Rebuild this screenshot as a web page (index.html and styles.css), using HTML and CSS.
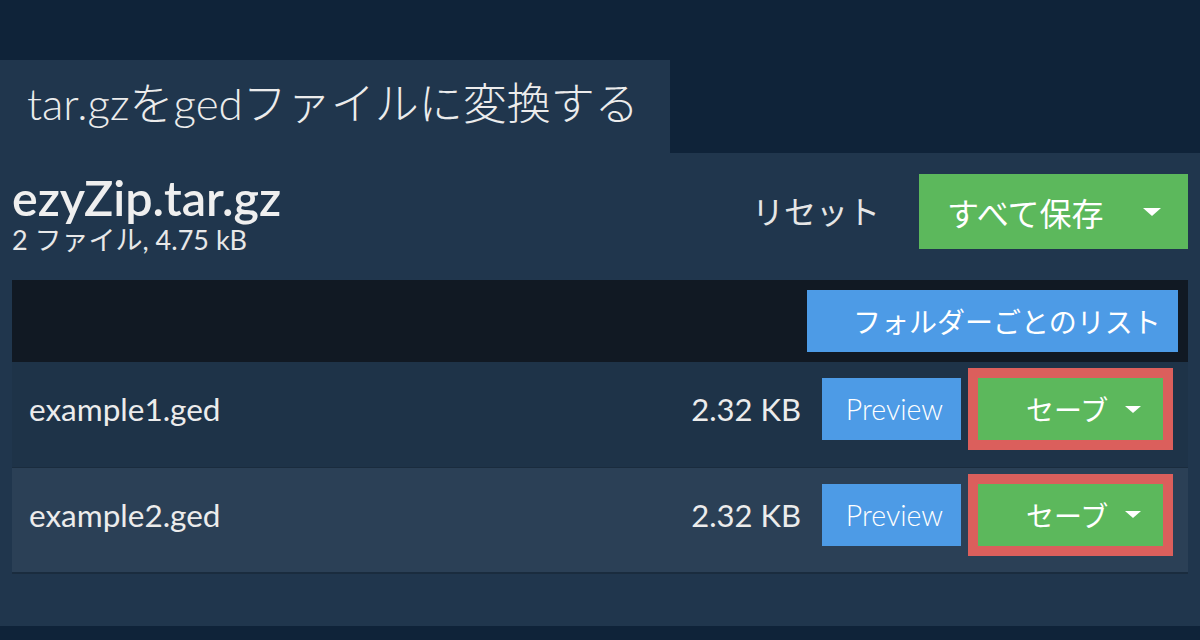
FILE: index.html
```html
<!DOCTYPE html>
<html lang="ja">
<head>
<meta charset="utf-8">
<title>tar.gzをgedファイルに変換する</title>
<link rel="stylesheet" href="styles.css">
</head>
<body>
<div class="page">
  <div class="tab"><h1 class="tab-title">tar.gzをgedファイルに変換する</h1></div>
  <div class="panel">
    <div class="head">
      <div class="info">
        <div class="archive-name">ezyZip.tar.gz</div>
        <div class="archive-meta">2 ファイル, 4.75 kB</div>
      </div>
      <div class="actions">
        <button class="btn-reset">リセット</button>
        <button class="btn-save-all">すべて保存<span class="caret caret-lg"></span></button>
      </div>
    </div>
    <div class="toolbar">
      <button class="btn-folder">フォルダーごとのリスト</button>
    </div>
    <div class="rows">
      <div class="row row-odd">
        <div class="file-name">example1.ged</div>
        <div class="file-size">2.32 KB</div>
        <button class="btn-preview">Preview</button>
        <button class="btn-save">セーブ<span class="caret caret-sm"></span></button>
      </div>
      <div class="row row-even">
        <div class="file-name">example2.ged</div>
        <div class="file-size">2.32 KB</div>
        <button class="btn-preview">Preview</button>
        <button class="btn-save">セーブ<span class="caret caret-sm"></span></button>
      </div>
    </div>
  </div>
</div>
</body>
</html>
```
FILE: styles.css
```css
* { box-sizing: border-box; }
html, body { margin: 0; padding: 0; }
body {
  background: #0f2339;
  font-family: Lato, "Noto Sans CJK JP", sans-serif;
  color: #eeeeee;
  width: 1200px;
  height: 640px;
  overflow: hidden;
}
button {
  font-family: Lato, "Noto Sans CJK JP", sans-serif;
  border: none;
  margin: 0;
  cursor: pointer;
}
.page { padding-top: 60px; }
.tab {
  display: inline-block;
  width: 670px;
  height: 93px;
  background: #20364d;
  padding: 0 0 0 27px;
}
.tab-title {
  margin: 0;
  font-size: 44px;
  font-weight: 300;
  line-height: 86px;
  color: #ececec;
  white-space: nowrap;
}
.panel {
  background: #20364d;
  padding: 21px 12px 54px 12px;
}
.head {
  display: flex;
  align-items: flex-start;
  justify-content: space-between;
}
.archive-name {
  font-size: 48.5px;
  font-weight: 600;
  line-height: 46px;
  color: #efefef;
}
.archive-meta {
  margin-top: 5px;
  font-size: 27px;
  line-height: 29px;
  color: #e8e8e8;
}
.actions {
  display: flex;
  align-items: center;
}
.btn-reset {
  background: transparent;
  color: #e6e6e6;
  font-size: 32px;
  font-weight: 400;
  padding: 0;
  margin-right: 39px;
  height: 75px;
  line-height: 75px;
}
.btn-save-all {
  display: flex;
  align-items: center;
  width: 269px;
  height: 75px;
  background: #5cb85c;
  color: #ffffff;
  font-size: 32px;
  padding: 0 0 0 28px;
}
.caret {
  display: inline-block;
  width: 0;
  height: 0;
  border-left: solid transparent;
  border-right: solid transparent;
  border-top: solid #ffffff;
}
.caret-lg {
  border-left-width: 9.5px;
  border-right-width: 9.5px;
  border-top-width: 8px;
  margin-left: 40px;
}
.caret-sm {
  border-left-width: 8px;
  border-right-width: 8px;
  border-top-width: 7px;
  margin-left: 17px;
}
.toolbar {
  margin-top: 26px;
  height: 82px;
  background: #111923;
  display: flex;
  align-items: center;
  justify-content: flex-end;
  padding-right: 10px;
}
.btn-folder {
  height: 62px;
  width: 371px;
  background: #4d9be6;
  color: #ffffff;
  font-size: 28px;
  padding: 0 0 0 46px;
  text-align: left;
  white-space: nowrap;
}
.rows {
  box-shadow: 0 2px 0 #1a2c3e;
}
.row {
  display: flex;
  align-items: center;
  padding: 6px 25px 17px 17px;
}
.row-odd {
  height: 106px;
  background: #1e3348;
  border-bottom: 1px solid #1a2c3e;
}
.row-even {
  height: 104px;
  background: #2b4056;
}
.file-name {
  flex: 1;
  font-size: 31.5px;
  font-weight: 400;
  color: #ececec;
}
.file-size {
  font-size: 31px;
  color: #ececec;
  margin-right: 21px;
}
.btn-preview {
  width: 139px;
  height: 62px;
  background: #4d9be6;
  color: #ffffff;
  font-size: 28.5px;
  font-weight: 300;
  margin-right: 17px;
  padding: 0 0 0 6px;
}
.btn-save {
  display: flex;
  align-items: center;
  width: 185px;
  height: 62px;
  background: #5cb85c;
  color: #ffffff;
  font-size: 28px;
  padding: 0 0 0 48px;
  outline: 10px solid #db5f5c;
  white-space: nowrap;
}
```
